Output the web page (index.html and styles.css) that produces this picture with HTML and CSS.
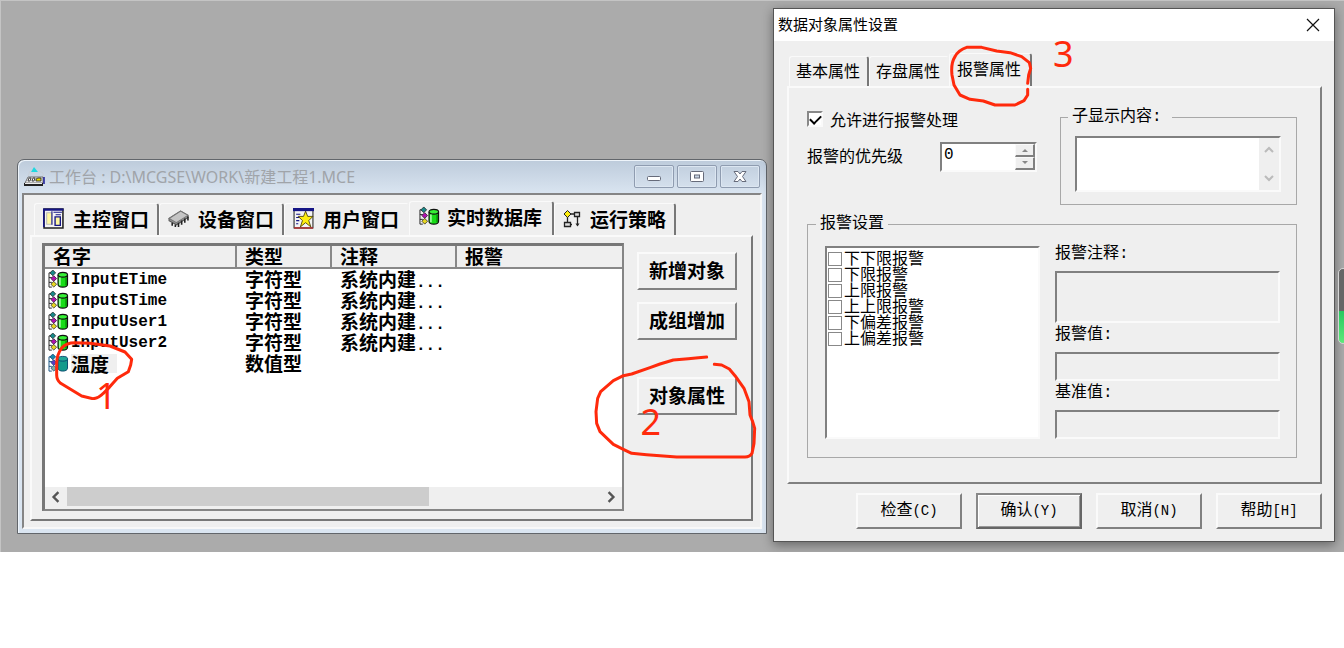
FILE: index.html
```
<!DOCTYPE html>
<html lang="zh-CN">
<head>
    <meta charset="UTF-8">
    <meta name="viewport" content="width=device-width, initial-scale=1.0">
    <title>数据对象属性设置</title>
    <link rel="stylesheet" href="styles.css">
</head>
<body>

    <!-- Iconos compartidos -->
    <svg class="sprites" aria-hidden="true">
        <symbol id="icon-db" viewBox="0 0 22 20">
            <path d="M4 3H1v15h3M1 8h3M1 13h3" fill="none" stroke="#222" stroke-width="1"/>
            <path d="M5 0l3 3-3 3-3-3z" fill="#178a8a" stroke="#222" stroke-width=".8"/>
            <path d="M6 6l3 3-3 3-3-3z" fill="#b010b0" stroke="#222" stroke-width=".8"/>
            <path d="M6 12l3 3-3 3-3-3z" fill="#e8d820" stroke="#222" stroke-width=".8"/>
            <path d="M10.500 5v10c0 4 10 4 10 0V5" fill="#18dc18" stroke="#111" stroke-width="1.200"/>
            <ellipse cx="15.500" cy="5" rx="5" ry="2.500" fill="#35f035" stroke="#111" stroke-width="1.200"/>
            <path d="M12.500 8v8" stroke="#b8ffb8" stroke-width="1.500"/>
            <path d="M19 8v8" stroke="#078a07" stroke-width="1.500"/>
        </symbol>
        <symbol id="icon-db-selected" viewBox="0 0 22 20">
            <path d="M4 3H1v15h3M1 8h3M1 13h3" fill="none" stroke="#14507f"/>
            <path d="M5 0l3 3-3 3-3-3z" fill="#168aa8" stroke="#123c70" stroke-width=".8"/>
            <path d="M6 6l3 3-3 3-3-3z" fill="#5a3cc0" stroke="#123c70" stroke-width=".8"/>
            <path d="M6 12l3 3-3 3-3-3z" fill="#7fb0a0" stroke="#123c70" stroke-width=".8"/>
            <path d="M10.500 5v10c0 4 10 4 10 0V5" fill="#159a8c" stroke="#0b4a70"/>
            <ellipse cx="15.500" cy="5" rx="5" ry="2.500" fill="#22a898" stroke="#0b4a70"/>
        </symbol>
    </svg>

    <main class="desktop">

        <!-- Ventana del proyecto -->
        <section class="workbench">
            <header class="workbench-title">
                <svg class="app-icon" viewBox="0 0 22 20">
                    <path d="M10 0l4 5H7z" fill="#20d8e0"/>
                    <path d="M4 9l2-5M15 4l4 2v4" fill="none" stroke="#c8d0d8"/>
                    <path d="M1 16l3-6h15v6z" fill="#e4e4e4" stroke="#555" stroke-width=".8"/>
                    <path d="M0 16h19v3H0z" fill="#222"/>
                    <path d="M1 16.500h17" stroke="#eee"/>
                    <path d="M5 11h2l-1 3H4zM9 11h2l-1 3H8z" fill="#fff" stroke="#222" stroke-width=".8"/>
                    <path d="M12 12l2-1h3v3h-5z" fill="#e8d800" stroke="#222" stroke-width=".8"/>
                    <path d="M20 10v7" stroke="#1a1a9a" stroke-width="1.500"/>
                </svg>
                <h1>工作台 : D:\MCGSE\WORK\新建工程1.MCE</h1>
                <div class="caption-buttons">
                    <button type="button" aria-label="最小化">
                        <svg viewBox="0 0 16 14"><rect x="1.500" y="6.500" width="13" height="4" rx="1" fill="#fff" stroke="#666b7a"/></svg>
                    </button>
                    <button type="button" aria-label="最大化">
                        <svg viewBox="0 0 16 14"><rect x="1.500" y="1.500" width="13" height="10" rx="1" fill="#fff" stroke="#666b7a"/><rect x="5.500" y="5" width="5" height="3" fill="#c7d4e3" stroke="#666b7a"/></svg>
                    </button>
                    <button type="button" aria-label="关闭">
                        <svg viewBox="0 0 16 14"><path d="M2 1.500h4l2 2.500 2-2.500h4L10.500 6.500l3.500 5h-4L8 9l-2 2.500H2l3.500-5z" fill="#fff" stroke="#666b7a"/></svg>
                    </button>
                </div>
            </header>

            <div class="workbench-client">
                <div class="tabs tabs-large" role="tablist">
                    <button type="button" role="tab" class="tab">
                        <svg class="tab-icon" viewBox="0 0 20 20"><path d="M1 1h18v18H1z" fill="#f4f4f4" stroke="#222" stroke-width="1.500"/><path d="M.500 18V1.500h19" fill="none" stroke="#151585" stroke-width="2"/><path d="M3.500 4.500h5v11h-5z" fill="#fff8a0" stroke="#bbb"/><path d="M8.500 3v13M10 4h8M12 6.500h5" stroke="#151585"/><path d="M11.500 8.500h5v8h-5z" fill="#fff8a0" stroke="#151585" stroke-width="1.300"/></svg>
                        主控窗口
                    </button>
                    <button type="button" role="tab" class="tab">
                        <svg class="tab-icon" viewBox="0 0 20 20"><path d="M1 10l11-7 7 4v2L8 16l-7-4z" fill="#999" stroke="#555"/><path d="M1 10l11-7 7 4-11 7z" fill="#c5c5c5" stroke="#777"/><path d="M4 14v3M7 16v2M10 14v4M13 12v4M16 10v4M19 8v4" stroke="#222" stroke-width="1.500"/></svg>
                        设备窗口
                    </button>
                    <button type="button" role="tab" class="tab">
                        <svg class="tab-icon" viewBox="0 0 20 20"><path d="M1 1h18v18H1z" fill="#f4f4f4" stroke="#222"/><path d="M0 1.500h20" stroke="#151585" stroke-width="3"/><path d="M3 6h4M3 9h3M3 12h3M3 15h2" stroke="#151585"/><path d="M1 19h18" stroke="#b03030" stroke-width="1.500"/><path d="M12 3l2 5h5l-4 4 2 6-5-4-5 4 2-6-4-4h5z" fill="#ffee10" stroke="#443800" stroke-width=".8"/></svg>
                        用户窗口
                    </button>
                    <button type="button" role="tab" class="tab active" aria-selected="true">
                        <svg class="tab-icon"><use href="#icon-db"/></svg>
                        实时数据库
                    </button>
                    <button type="button" role="tab" class="tab">
                        <svg class="tab-icon narrow" viewBox="0 0 18 20"><path d="M4.500 8v6M7 5.500h5M14.500 8v9M7 16h2" fill="none" stroke="#222" stroke-width="1.300"/><path d="M4.500 2L8 5.500 4.500 9 1 5.500z" fill="#ffee10" stroke="#222"/><path d="M11.500 4h5v4h-5zM1.500 14h6v4h-6z" fill="#ddd" stroke="#222" stroke-width="1.300"/><path d="M12.500 15l2 3 2-3z" fill="#222"/></svg>
                        运行策略
                    </button>
                </div>

                <div class="workbench-page">
                    <div class="object-list">
                        <table>
                            <colgroup>
                                <col class="col-name">
                                <col class="col-type">
                                <col class="col-note">
                                <col>
                            </colgroup>
                            <thead>
                                <tr><th>名字</th><th>类型</th><th>注释</th><th>报警</th></tr>
                            </thead>
                            <tbody>
                                <tr>
                                    <td><svg class="row-icon"><use href="#icon-db"/></svg><span class="latin">InputETime</span></td>
                                    <td>字符型</td><td>系统内建<span class="latin">...</span></td><td></td>
                                </tr>
                                <tr>
                                    <td><svg class="row-icon"><use href="#icon-db"/></svg><span class="latin">InputSTime</span></td>
                                    <td>字符型</td><td>系统内建<span class="latin">...</span></td><td></td>
                                </tr>
                                <tr>
                                    <td><svg class="row-icon"><use href="#icon-db"/></svg><span class="latin">InputUser1</span></td>
                                    <td>字符型</td><td>系统内建<span class="latin">...</span></td><td></td>
                                </tr>
                                <tr>
                                    <td><svg class="row-icon"><use href="#icon-db"/></svg><span class="latin">InputUser2</span></td>
                                    <td>字符型</td><td>系统内建<span class="latin">...</span></td><td></td>
                                </tr>
                                <tr>
                                    <td><svg class="row-icon"><use href="#icon-db-selected"/></svg><span class="selected">温度</span></td>
                                    <td>数值型</td><td></td><td></td>
                                </tr>
                            </tbody>
                        </table>
                        <div class="scrollbar">
                            <button type="button" aria-label="向左滚动"><svg viewBox="0 0 10 10"><path d="M7 1L3 5l4 4" fill="none" stroke="#555" stroke-width="2"/></svg></button>
                            <div class="track"><div class="thumb"></div></div>
                            <button type="button" aria-label="向右滚动"><svg viewBox="0 0 10 10"><path d="M3 1l4 4-4 4" fill="none" stroke="#555" stroke-width="2"/></svg></button>
                        </div>
                    </div>
                    <div class="side-buttons">
                        <button type="button" class="button">新增对象</button>
                        <button type="button" class="button">成组增加</button>
                        <button type="button" class="button spaced">对象属性</button>
                    </div>
                </div>
            </div>

            <svg class="mark mark-one" viewBox="60 240 270 180"><path d="M95 264C105 252 118 248 135 248L180 250 240 258 285 276 305 298 302 315 295 335 262 355 238 382 220 400Q205 416 188 416L155 408 92 370Q80 360 80 345V310Q80 285 95 264"/></svg>
            <span class="mark mark-number number-one">1</span>
            <svg class="mark mark-two" viewBox="90 345 510 330"><path d="M440 366L415 368 385 371 340 375 300 387 270 398 215 417 190 422 160 437 122 470 113 490 108 530 110 565 120 590 160 628 190 643 215 655 260 659 350 666H555Q570 666 576 655L582 625 584 580 578 560 570 540 567 500 552 460 525 422 508 402 485 390 463 388"/></svg>
            <span class="mark mark-number number-two">2</span>
        </section>

        <!-- Diálogo de propiedades -->
        <section class="dialog">
            <header class="dialog-title">
                <h2>数据对象属性设置</h2>
                <button type="button" aria-label="关闭"><svg viewBox="0 0 14 14"><path d="M1 1l12 12M13 1L1 13" stroke="#111" stroke-width="1.200"/></svg></button>
            </header>

            <div class="dialog-body">
                <div class="tabs" role="tablist">
                    <button type="button" role="tab" class="tab">基本属性</button>
                    <button type="button" role="tab" class="tab">存盘属性</button>
                    <button type="button" role="tab" class="tab active" aria-selected="true">报警属性</button>
                </div>

                <div class="dialog-page">
                    <div class="top-row">
                        <div class="options">
                            <label class="enable"><input type="checkbox" checked>允许进行报警处理</label>
                            <div class="priority">
                                <label for="priority">报警的优先级</label>
                                <div class="spinner">
                                    <input type="text" id="priority" value="0">
                                    <div class="spin-buttons">
                                        <button type="button" aria-label="增加"><svg viewBox="0 0 6 4"><path d="M0 4h6L3 1z" fill="#888"/></svg></button>
                                        <button type="button" aria-label="减少"><svg viewBox="0 0 6 4"><path d="M0 0h6L3 3z" fill="#888"/></svg></button>
                                    </div>
                                </div>
                            </div>
                        </div>
                        <fieldset class="group display-group">
                            <legend>子显示内容:</legend>
                            <div class="memo">
                                <textarea aria-label="子显示内容"></textarea>
                                <div class="memo-scroll">
                                    <button type="button" aria-label="向上滚动"><svg viewBox="0 0 10 8"><path d="M1 6l4-4 4 4" fill="none" stroke="#bbb" stroke-width="2"/></svg></button>
                                    <button type="button" aria-label="向下滚动"><svg viewBox="0 0 10 8"><path d="M1 2l4 4 4-4" fill="none" stroke="#bbb" stroke-width="2"/></svg></button>
                                </div>
                            </div>
                        </fieldset>
                    </div>

                    <fieldset class="group alarm-group">
                        <legend>报警设置</legend>
                        <div class="alarm-content">
                            <div class="check-list">
                                <label><input type="checkbox">下下限报警</label>
                                <label><input type="checkbox">下限报警</label>
                                <label><input type="checkbox">上限报警</label>
                                <label><input type="checkbox">上上限报警</label>
                                <label><input type="checkbox">下偏差报警</label>
                                <label><input type="checkbox">上偏差报警</label>
                            </div>
                            <div class="alarm-fields">
                                <div class="field">
                                    <label for="note">报警注释:</label>
                                    <textarea id="note" disabled></textarea>
                                </div>
                                <div class="field">
                                    <label for="alarm-value">报警值:</label>
                                    <input type="text" id="alarm-value" disabled>
                                </div>
                                <div class="field">
                                    <label for="base-value">基准值:</label>
                                    <input type="text" id="base-value" disabled>
                                </div>
                            </div>
                        </div>
                    </fieldset>
                </div>

                <div class="dialog-buttons">
                    <button type="button" class="button">检查<span>(C)</span></button>
                    <button type="button" class="button default">确认<span>(Y)</span></button>
                    <button type="button" class="button">取消<span>(N)</span></button>
                    <button type="button" class="button">帮助<span>[H]</span></button>
                </div>
            </div>

            <svg class="mark mark-three" viewBox="525 120 270 210"><path d="M773 250L776 225 782 205 778 188 755 170 720 158 680 153 635 142H590Q565 150 555 170 542 190 546 225L552 255 570 285 600 298 640 303 675 315H735L762 302 773 285V268"/></svg>
            <span class="mark mark-number number-three">3</span>
        </section>

        <div class="edge-widget"></div>
    </main>

</body>
</html>
```
FILE: styles.css
```
/* Estilos generales */
* {
    box-sizing: border-box;
}

body {
    margin: 0;
    background: #fff;
    color: #000;
    font-family: "Noto Sans CJK SC", sans-serif;
    font-size: 16px;
}

button, input, textarea {
    margin: 0;
    padding: 0;
    border: none;
    border-radius: 0;
    background: none;
    color: inherit;
    font: inherit;
}

h1, h2 {
    margin: 0;
    font-weight: normal;
}

.sprites {
    position: absolute;
    width: 0;
    height: 0;
}

.desktop {
    position: relative;
    display: flex;
    align-items: flex-end;
    gap: 6px;
    padding: 8px 9px 10px 17px;
    background: #ababab;
    box-shadow: inset 1px 1px 0 #c4c4c4;
    overflow: hidden;
}

/* --- PESTAÑAS --- */
.tabs {
    display: flex;
    align-items: flex-end;
    padding-left: 2px;
}

.tab {
    display: flex;
    align-items: center;
    height: 30px;
    padding: 0 7px 3px 6px;
    border: 1px solid #fafafa;
    border-right: 2px solid #777;
    border-bottom: none;
    border-radius: 3px 3px 0 0;
    background: #efefef;
    white-space: nowrap;
}

.tab.active {
    height: 33px;
    padding: 0 9px 5px 7px;
}

.tab:has(+ .active) {
    border-right-color: #efefef;
}

.tabs-large {
    padding-left: 4px;
    font-size: 19px;
    font-weight: bold;
}

.tabs-large .tab {
    gap: 9px;
    height: 32px;
    padding: 0 8px 3px;
}

.tabs-large .tab.active {
    height: 34px;
    padding: 0 10px 5px 9px;
    gap: 7px;
}

.tab-icon {
    width: 21px;
    height: 21px;
}

.tab-icon.narrow {
    width: 18px;
}

/* --- BOTONES --- */
.button {
    padding-bottom: 3px;
    border: 2px solid;
    border-color: #fafafa #808080 #808080 #fafafa;
    background: #efefef;
    line-height: 20px;
}

/* --- VENTANA DEL PROYECTO --- */
.workbench {
    position: relative;
    flex: 1;
    min-width: 0;
    margin-bottom: 8px;
    padding: 0 4px 4px;
    border: 1px solid #62666b;
    border-radius: 7px 7px 0 0;
    background: linear-gradient(#bdcbdb, #dae5f1 34px);
    box-shadow: inset 1px 1px 0 #eef4fa;
}

.workbench-title {
    display: flex;
    align-items: center;
    height: 33px;
    padding: 0 2px;
}

.app-icon {
    width: 22px;
    height: 20px;
    margin-right: 3px;
}

.workbench-title h1 {
    flex: 1;
    color: #a0a4a9;
    font-family: "Noto Sans", "Noto Sans CJK SC", sans-serif;
    font-size: 16px;
    line-height: 24px;
    white-space: nowrap;
}

.caption-buttons {
    display: flex;
    gap: 3px;
}

.caption-buttons button {
    display: flex;
    align-items: center;
    justify-content: center;
    width: 40px;
    height: 23px;
    border: 1px solid #8f9cb0;
    border-radius: 2px;
    box-shadow: inset 0 0 0 1px #dce6f1;
}

.caption-buttons svg {
    width: 16px;
    height: 14px;
}

.workbench-client {
    padding: 6px 7px 6px 6px;
    border: 2px solid;
    border-color: #858585 #f8f8f8 #f8f8f8 #858585;
    background: #efefef;
}

.workbench-page {
    display: flex;
    gap: 13px;
    padding: 6px 14px 8px 10px;
    border: 2px solid;
    border-color: #fafafa #777 #777 #fafafa;
}

.object-list {
    display: flex;
    flex: 1;
    flex-direction: column;
    min-width: 0;
    min-height: 268px;
    border: 3px solid;
    border-color: #777 #858585 #858585 #777;
    border-right-width: 2px;
    border-bottom-width: 2px;
    background: #fff;
    overflow: hidden;
}

.object-list table {
    width: 100%;
    border-collapse: separate;
    border-spacing: 0;
    table-layout: fixed;
    font-size: 19px;
    font-weight: bold;
    text-align: left;
    white-space: nowrap;
}

.col-name {
    width: 192px;
}

.col-type {
    width: 95px;
}

.col-note {
    width: 125px;
}

.object-list th {
    height: 23px;
    padding: 0 8px 2px;
    border-right: 2px solid #888;
    border-bottom: 2px solid #888;
    background: #efefef;
    line-height: 19px;
}

.object-list th:last-child {
    border-right: none;
}

.object-list td {
    height: 21px;
    padding: 0 8px;
    line-height: 19px;
    vertical-align: top;
}

.object-list td:first-child {
    display: flex;
    align-items: center;
    padding: 0 3px;
}

.row-icon {
    width: 21px;
    height: 19px;
    margin-right: 2px;
}

.latin {
    font-family: "Liberation Mono", monospace;
    font-size: 16px;
    line-height: 12px;
}

.selected {
    padding-right: 8px;
    background: #efefef;
}

.scrollbar {
    display: flex;
    height: 22px;
    margin-top: auto;
    padding-bottom: 3px;
    background: #efefef;
}

.scrollbar button {
    display: flex;
    align-items: center;
    justify-content: center;
    width: 22px;
}

.scrollbar svg {
    width: 12px;
    height: 12px;
}

.track {
    flex: 1;
}

.thumb {
    width: 68%;
    height: 100%;
    background: #cdcdcd;
}

.side-buttons {
    display: flex;
    flex-direction: column;
    gap: 12px;
    width: 100px;
    padding-top: 9px;
}

.side-buttons .button {
    height: 38px;
    font-size: 19px;
    font-weight: bold;
}

.side-buttons .spaced {
    margin-top: 25px;
}

/* --- DIÁLOGO DE PROPIEDADES --- */
.dialog {
    position: relative;
    flex: none;
    width: 562px;
    border: 1px solid #555;
    background: #efefef;
    box-shadow: 0 3px 10px rgba(0, 0, 0, 0.4);
}

.dialog-title {
    display: flex;
    align-items: center;
    justify-content: space-between;
    height: 32px;
    padding: 0 14px 0 4px;
    background: #fff;
}

.dialog-title h2 {
    padding-bottom: 2px;
    font-size: 15px;
    line-height: 24px;
}

.dialog-title button {
    display: flex;
}

.dialog-title svg {
    width: 14px;
    height: 14px;
}

.dialog-body {
    padding: 12px 12px 12px 13px;
}

.dialog-page {
    padding: 19px 23px 24px 18px;
    border: 2px solid;
    border-color: #fafafa #808080 #808080 #fafafa;
}

.top-row {
    display: flex;
    justify-content: space-between;
    margin-bottom: 9px;
}

.options {
    display: flex;
    flex-direction: column;
    gap: 12px;
}

.enable {
    display: flex;
    align-items: center;
    gap: 7px;
    height: 23px;
}

.enable input,
.check-list input {
    appearance: none;
    flex: none;
    background: #fff;
}

.enable input {
    width: 16px;
    height: 16px;
    border: 2px solid;
    border-color: #888 #fafafa #fafafa #888;
}

.enable input:checked::before {
    content: "";
    display: block;
    width: 9px;
    height: 5px;
    margin: 2px 1px;
    border: solid #000;
    border-width: 0 0 2px 2px;
    transform: rotate(-45deg);
}

.priority {
    display: flex;
    justify-content: space-between;
    width: 230px;
    line-height: 26px;
}

.spinner {
    display: flex;
    width: 97px;
    height: 30px;
    border: 2px solid;
    border-color: #808080 #fafafa #fafafa #808080;
    background: #fff;
}

.spinner input {
    width: 73px;
    height: 22px;
    padding-left: 2px;
    font-family: "Liberation Mono", monospace;
}

.spin-buttons {
    display: flex;
    flex: 1;
    flex-direction: column;
}

.spin-buttons button {
    display: flex;
    flex: 1;
    align-items: center;
    justify-content: center;
    border: solid;
    border-width: 1px 2px 2px 1px;
    border-color: #fafafa #808080 #808080 #fafafa;
    background: #efefef;
}

.spin-buttons svg {
    width: 6px;
    height: 4px;
}

.group {
    min-width: 0;
    margin: 0;
    border: 1px solid #a8a8a8;
}

.group legend,
.field label {
    font-family: "Liberation Mono", "Noto Sans CJK SC", monospace;
}

.group legend {
    height: 20px;
    padding: 0 4px;
    line-height: 20px;
}

.display-group {
    width: 237px;
    padding: 9px 15px 12px 14px;
}

.display-group legend {
    margin-left: -7px;
    padding-right: 10px;
}

.memo {
    display: flex;
    height: 56px;
    border: 2px solid;
    border-color: #808080 #fafafa #fafafa #808080;
    background: #fff;
}

.memo textarea {
    flex: 1;
    min-width: 0;
    resize: none;
}

.memo-scroll {
    display: flex;
    flex-direction: column;
    justify-content: space-between;
    width: 20px;
    padding: 8px 5px;
    background: #efefef;
}

.memo-scroll button {
    display: flex;
}

.memo-scroll svg {
    width: 10px;
    height: 8px;
}

.alarm-group {
    padding: 12px 16px 18px 17px;
}

.alarm-group legend {
    margin-left: -9px;
}

.alarm-content {
    display: flex;
    gap: 15px;
}

.check-list {
    width: 215px;
    min-height: 192px;
    padding: 2px 1px;
    border: 2px solid;
    border-color: #808080 #fafafa #fafafa #808080;
    background: #fff;
}

.check-list label {
    display: flex;
    align-items: flex-end;
    gap: 2px;
    height: 16px;
    line-height: 18px;
}

.check-list input {
    width: 14px;
    height: 14px;
    border: 1px solid #888;
}

.alarm-fields {
    display: flex;
    flex: 1;
    flex-direction: column;
    gap: 4px;
}

.field {
    display: flex;
    flex-direction: column;
    gap: 9px;
}

.field label {
    line-height: 16px;
}

.field input,
.field textarea {
    width: 100%;
    height: 29px;
    border: 2px solid;
    border-color: #808080 #fafafa #fafafa #808080;
    resize: none;
}

.field textarea {
    height: 52px;
}

.dialog-buttons {
    display: flex;
    justify-content: flex-end;
    gap: 14px;
    margin-top: 9px;
}

.dialog-buttons .button {
    width: 106px;
    height: 36px;
}

.dialog-buttons .default {
    border-color: #888 #666 #666 #888;
    box-shadow: inset 1px 1px 0 #fff, inset -1px -1px 0 #999;
}

.dialog-buttons span {
    font-family: "Liberation Mono", monospace;
    font-size: 14px;
}

/* --- MARCAS EN ROJO --- */
.mark {
    position: absolute;
    pointer-events: none;
}

.mark path {
    fill: none;
    stroke: #ff2a0c;
    stroke-width: 9;
    stroke-linecap: round;
    stroke-linejoin: round;
}

.mark-number {
    color: #ff2a0c;
    font-family: "Noto Sans", sans-serif;
    font-size: 36px;
    line-height: 36px;
}

.mark-one {
    left: 32px;
    top: 180px;
    width: 90px;
    height: 60px;
}

.number-one {
    left: 78px;
    top: 218px;
}

.mark-two {
    right: 6px;
    top: 190px;
    width: 170px;
    height: 110px;
}

.number-two {
    right: 105px;
    top: 244px;
}

.mark-three {
    left: 171px;
    top: 31px;
    width: 90px;
    height: 70px;
}

.number-three {
    left: 279px;
    top: 27px;
}

/* Indicador pegado al borde derecho */
.edge-widget {
    position: absolute;
    right: -4px;
    top: 268px;
    width: 10px;
    height: 76px;
    border: 1px solid #d4d4d4;
    border-radius: 5px;
    background: linear-gradient(#666 42px, #28c860 42px, #5de87a);
}
```
